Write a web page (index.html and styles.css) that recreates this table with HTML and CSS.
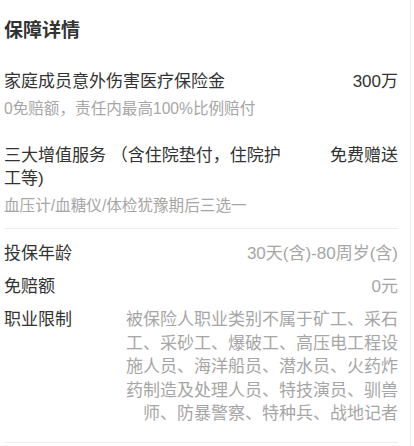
FILE: index.html
```html
<!DOCTYPE html>
<html lang="zh-CN">
<head>
<meta charset="utf-8">
<title>保障详情</title>
<link rel="stylesheet" href="styles.css">
</head>
<body>
<div class="page">
  <h2 class="title">保障详情</h2>
  <div class="benefits">
    <div class="benefit">
      <div class="benefit-main">
        <div class="benefit-name">家庭成员意外伤害医疗保险金</div>
        <div class="benefit-desc">0免赔额，责任内最高100%比例赔付</div>
      </div>
      <div class="benefit-amount">300万</div>
    </div>
    <div class="benefit">
      <div class="benefit-main">
        <div class="benefit-name">三大增值服务 （含住院垫付，住院护工等)</div>
        <div class="benefit-desc">血压计/血糖仪/体检犹豫期后三选一</div>
      </div>
      <div class="benefit-amount">免费赠送</div>
    </div>
  </div>
  <div class="divider"></div>
  <div class="info">
    <div class="info-row">
      <div class="info-label">投保年龄</div>
      <div class="info-value">30天(含)-80周岁(含)</div>
    </div>
    <div class="info-row">
      <div class="info-label">免赔额</div>
      <div class="info-value">0元</div>
    </div>
    <div class="info-row">
      <div class="info-label">职业限制</div>
      <div class="info-value info-value-long">被保险人职业类别不属于矿工、采石工、采砂工、爆破工、高压电工程设施人员、海洋船员、潜水员、火药炸药制造及处理人员、特技演员、驯兽师、防暴警察、特种兵、战地记者</div>
    </div>
  </div>
  <div class="divider divider-bottom"></div>
</div>
</body>
</html>
```

FILE: styles.css
```css
html, body {
  margin: 0;
  padding: 0;
  background: #fff;
}

body {
  font-family: "Liberation Sans", "Noto Sans CJK SC", sans-serif;
  color: #333;
}

.page {
  width: 411px;
  min-height: 446px;
  box-sizing: border-box;
  padding: 17px 12px 0 4px;
  border-right: 1px solid #ececec;
}

.title {
  margin: 0;
  font-size: 19px;
  line-height: 27px;
  font-weight: bold;
  color: #333;
}

.benefits {
  display: flex;
  flex-direction: column;
  gap: 25px;
  padding-top: 26px;
}

.benefit {
  display: flex;
  justify-content: space-between;
  align-items: flex-start;
}

.benefit-main {
  flex: 1;
  min-width: 0;
}

.benefit-name {
  font-size: 17px;
  line-height: 23.5px;
  color: #333;
}

.benefit-desc {
  margin-top: 4px;
  font-size: 15.6px;
  line-height: 21px;
  color: #a6a6a6;
}

.benefit-amount {
  flex-shrink: 0;
  margin-left: 40px;
  font-size: 17px;
  line-height: 23.5px;
  color: #333;
  white-space: nowrap;
}

.divider {
  height: 1px;
  background: #ededed;
  margin: 12px 0 13.5px;
}

.divider-bottom {
  margin: 16px 0 0;
}

.info {
  display: flex;
  flex-direction: column;
  gap: 9.5px;
}

.info-row {
  display: flex;
  justify-content: space-between;
  align-items: flex-start;
  font-size: 17px;
  line-height: 23.5px;
}

.info-label {
  flex-shrink: 0;
  color: #333;
}

.info-value {
  text-align: right;
  color: #a6a6a6;
}

.info-value-long {
  flex: 0 0 274px;
}
```
